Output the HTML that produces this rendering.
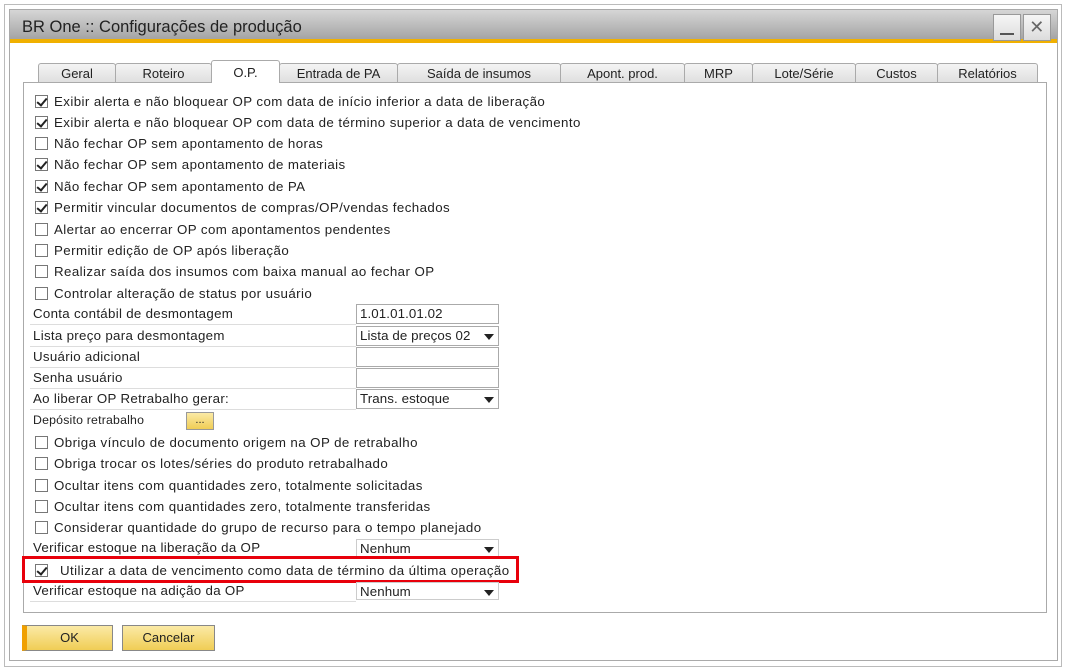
<!DOCTYPE html>
<html><head><meta charset="utf-8"><style>
*{box-sizing:border-box;margin:0;padding:0}
body{width:1066px;height:671px;background:#fff;position:relative;overflow:hidden;font-family:"Liberation Sans",sans-serif;font-size:13.3px;letter-spacing:0.42px;color:#222}
.frame{position:absolute;left:4px;top:4px;width:1058px;height:663px;border:1px solid #bbb;background:#fff}
.win{position:absolute;left:9px;top:9px;width:1049px;height:652px;border:1px solid #aaa;background:#fff}
.title{position:absolute;left:10px;top:10px;width:1047px;height:33px;background:linear-gradient(#d6d6d6,#a4a4a4);border-bottom:4px solid #f0b000;font-size:16.5px;letter-spacing:0;padding:8px 0 0 12px;color:#222}
.tb{position:absolute;top:14px;width:28px;height:27px;background:linear-gradient(#f6f6f6,#dcdcdc);border:1px solid #999}
.tab{position:absolute;top:63px;height:20px;border:1px solid #aaa;border-bottom:none;background:linear-gradient(#f4f4f4,#dedede);text-align:center;font-size:13px;letter-spacing:0;padding-top:2px;border-radius:3px 3px 0 0}
.tab.a{top:60px;height:23px;background:#fff;z-index:2;padding-top:4px}
.panel{position:absolute;left:23px;top:82px;width:1024px;height:531px;border:1px solid #aaa;background:#fff}
.row{position:absolute;left:33px;height:21px;line-height:21px;white-space:nowrap}
.cb{position:absolute;left:35px;width:13px;height:13px;border:1px solid #777;background:#fff}
.cb.c::after{content:"";position:absolute;left:3px;top:0px;width:4px;height:8px;border:solid #222;border-width:0 2px 2px 0;transform:rotate(40deg)}
.lab{position:absolute;left:30px;width:326px;height:21px;border-bottom:1px solid #ddd;padding-left:3px;line-height:20px;white-space:nowrap;letter-spacing:0.3px}
.inp{position:absolute;left:356px;width:143px;height:20px;border:1px solid #aaa;background:#fff;padding-left:3px;line-height:18px;white-space:nowrap;letter-spacing:0.1px}
.inp.dd::after{content:"";position:absolute;right:4px;top:7px;border:5px solid transparent;border-top:6px solid #222;border-bottom:none}
.btn{position:absolute;top:625px;height:26px;border:1px solid #888;background:linear-gradient(#fbeaa6,#f0cd55);text-align:center;line-height:24px;font-size:13px;letter-spacing:0}
</style></head><body>
<div class="frame"></div><div class="win"></div>
<div class="title">BR One :: Configurações de produção</div>
<div class="tb" style="left:993px"><div style="position:absolute;left:6px;bottom:5px;width:14px;height:2px;background:#555"></div></div>
<div class="tb" style="left:1023px;font-size:18px;line-height:24px;text-align:center;color:#666">✕</div>
<div class="tab" style="left:38px;width:78px">Geral</div>
<div class="tab" style="left:115px;width:97px">Roteiro</div>
<div class="tab a" style="left:211px;width:69px">O.P.</div>
<div class="tab" style="left:279px;width:119px">Entrada de PA</div>
<div class="tab" style="left:397px;width:164px">Saída de insumos</div>
<div class="tab" style="left:560px;width:125px">Apont. prod.</div>
<div class="tab" style="left:684px;width:69px">MRP</div>
<div class="tab" style="left:752px;width:104px">Lote/Série</div>
<div class="tab" style="left:855px;width:83px">Custos</div>
<div class="tab" style="left:937px;width:101px">Relatórios</div>
<div class="panel"></div>

<div class="cb c" style="top:95px"></div><div class="row" style="left:54px;top:91px">Exibir alerta e não bloquear OP com data de início inferior a data de liberação</div>
<div class="cb c" style="top:116px"></div><div class="row" style="left:54px;top:112px">Exibir alerta e não bloquear OP com data de término superior a data de vencimento</div>
<div class="cb" style="top:137px"></div><div class="row" style="left:54px;top:133px">Não fechar OP sem apontamento de horas</div>
<div class="cb c" style="top:158px"></div><div class="row" style="left:54px;top:154px">Não fechar OP sem apontamento de materiais</div>
<div class="cb c" style="top:180px"></div><div class="row" style="left:54px;top:176px">Não fechar OP sem apontamento de PA</div>
<div class="cb c" style="top:201px"></div><div class="row" style="left:54px;top:197px">Permitir vincular documentos de compras/OP/vendas fechados</div>
<div class="cb" style="top:223px"></div><div class="row" style="left:54px;top:219px">Alertar ao encerrar OP com apontamentos pendentes</div>
<div class="cb" style="top:244px"></div><div class="row" style="left:54px;top:240px">Permitir edição de OP após liberação</div>
<div class="cb" style="top:265px"></div><div class="row" style="left:54px;top:261px">Realizar saída dos insumos com baixa manual ao fechar OP</div>
<div class="cb" style="top:287px"></div><div class="row" style="left:54px;top:283px">Controlar alteração de status por usuário</div>

<div class="lab" style="top:304px">Conta contábil de desmontagem</div><div class="inp" style="top:304px">1.01.01.01.02</div>
<div class="lab" style="top:326px">Lista preço para desmontagem</div><div class="inp dd" style="top:326px">Lista de preços 02</div>
<div class="lab" style="top:347px">Usuário adicional</div><div class="inp" style="top:347px"></div>
<div class="lab" style="top:368px">Senha usuário</div><div class="inp" style="top:368px"></div>
<div class="lab" style="top:389px">Ao liberar OP Retrabalho gerar:</div><div class="inp dd" style="top:389px">Trans. estoque</div>
<div class="row" style="top:410px;font-size:12.3px;letter-spacing:0.2px">Depósito retrabalho</div>
<div style="position:absolute;left:186px;top:412px;width:28px;height:18px;border:1px solid #999;background:linear-gradient(#fbeaa6,#f0cd55);text-align:center;font-size:11px;line-height:14px;letter-spacing:0">...</div>

<div class="cb" style="top:436px"></div><div class="row" style="left:54px;top:432px">Obriga vínculo de documento origem na OP de retrabalho</div>
<div class="cb" style="top:457px"></div><div class="row" style="left:54px;top:453px">Obriga trocar os lotes/séries do produto retrabalhado</div>
<div class="cb" style="top:479px"></div><div class="row" style="left:54px;top:475px">Ocultar itens com quantidades zero, totalmente solicitadas</div>
<div class="cb" style="top:500px"></div><div class="row" style="left:54px;top:496px">Ocultar itens com quantidades zero, totalmente transferidas</div>
<div class="cb" style="top:521px"></div><div class="row" style="left:54px;top:517px">Considerar quantidade do grupo de recurso para o tempo planejado</div>
<div class="lab" style="top:538px">Verificar estoque na liberação da OP</div><div class="inp dd" style="top:539px;height:18px;border-color:#ccc">Nenhum</div>
<div class="cb c" style="top:564px"></div><div class="row" style="left:60px;top:560px">Utilizar a data de vencimento como data de término da última operação</div>
<div style="position:absolute;left:22px;top:556px;width:497px;height:27px;border:3px solid #e8000b"></div>
<div class="lab" style="top:581px">Verificar estoque na adição da OP</div><div class="inp dd" style="top:582px;height:18px;border-color:#ccc">Nenhum</div>

<div class="btn" style="left:22px;width:91px;border-left:5px solid #f0a000">OK</div>
<div class="btn" style="left:122px;width:93px">Cancelar</div>
</body></html>
